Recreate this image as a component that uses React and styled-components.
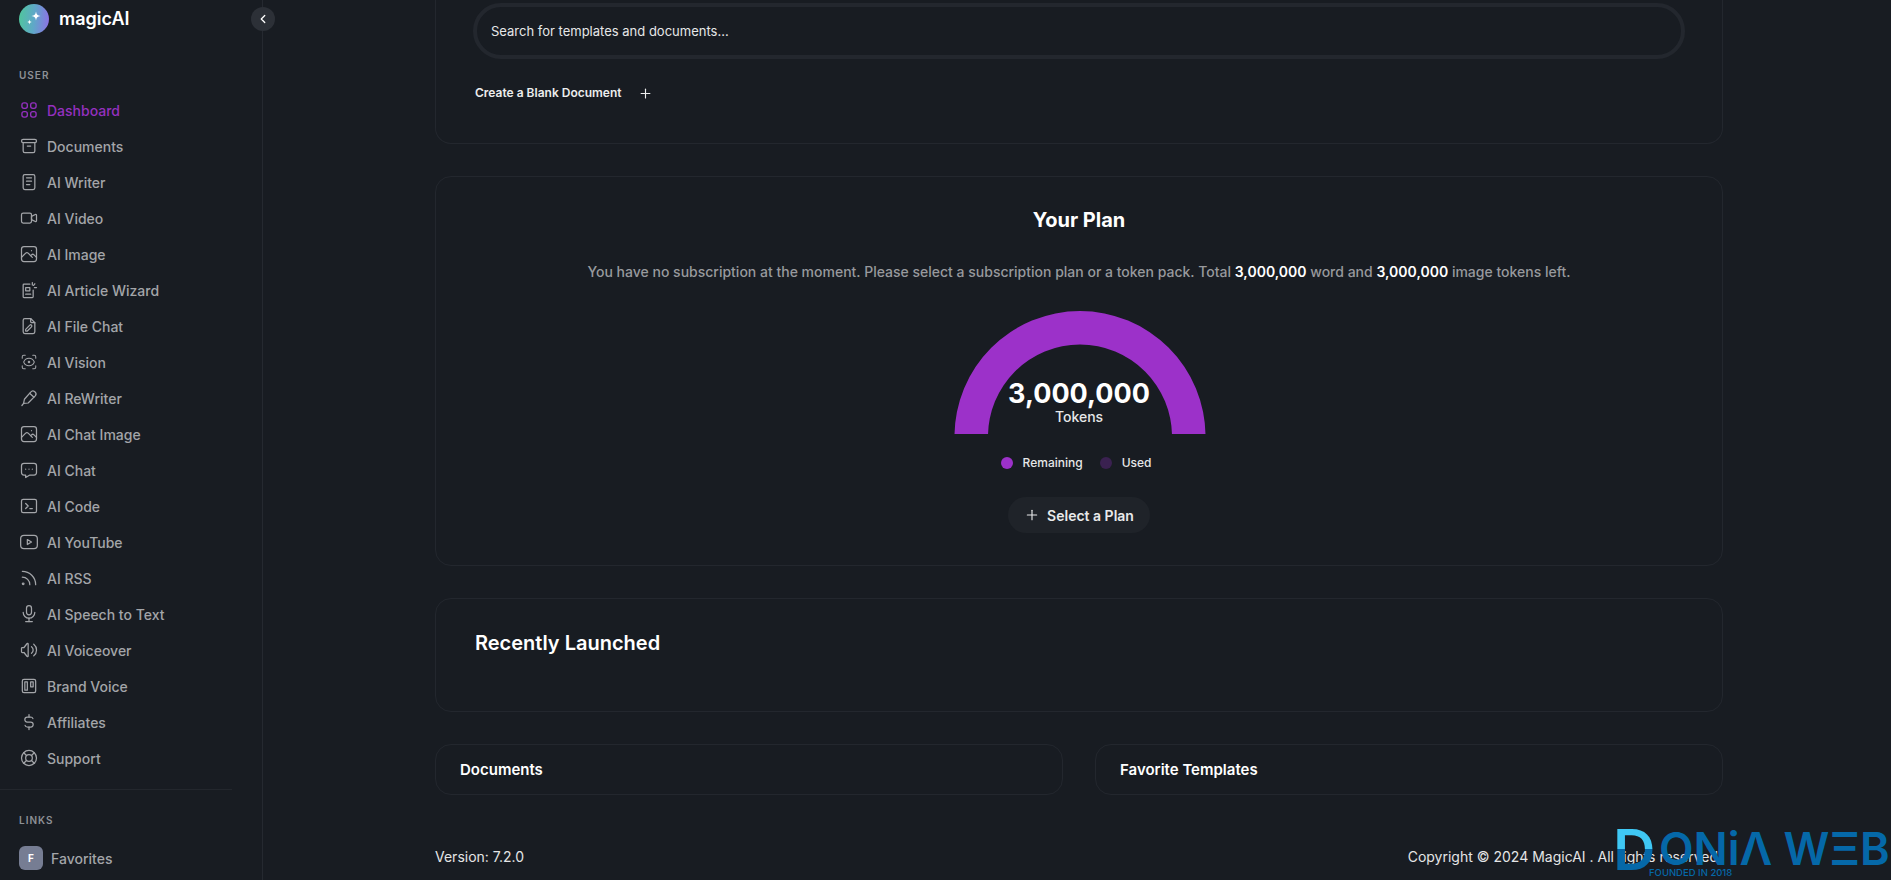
import React from "react";
import styled, { createGlobalStyle } from "styled-components";
import { ScanEye } from "lucide-react";
import {
  TbArchive,
  TbNotes,
  TbVideo,
  TbPhoto,
  TbFilePencil,
  TbMessageDots,
  TbTerminal2,
  TbBrandYoutube,
  TbRss,
  TbMicrophone,
  TbVolume,
  TbBrandTrello,
  TbCurrencyDollar,
  TbLifebuoy,
  TbChevronLeft,
  TbPlus,
} from "react-icons/tb";

const DashboardIcon = () => (
  <svg width="20" height="20" viewBox="0 0 24 24" fill="none" stroke="currentColor" strokeWidth="1.6">
    <rect x="3.500" y="3.500" width="6.500" height="6.500" rx="2.500" />
    <rect x="14" y="3.500" width="6.500" height="6.500" rx="2.500" />
    <rect x="3.500" y="14" width="6.500" height="6.500" rx="2.500" />
    <rect x="14" y="14" width="6.500" height="6.500" rx="2.500" />
  </svg>
);

const ArticleIcon = () => (
  <svg width="20" height="20" viewBox="0 0 24 24" fill="none" stroke="currentColor" strokeWidth="1.5" strokeLinecap="round" strokeLinejoin="round">
    <path d="M13 5H6a1 1 0 0 0-1 1v14a1 1 0 0 0 1 1h10a1 1 0 0 0 1-1v-8" />
    <rect x="8" y="9" width="5" height="4" />
    <path d="M8 17h6" />
    <path d="M16 3v3M19 4.500l-1.500 2M21 9h-2.500" />
  </svg>
);

const PenIcon = () => (
  <svg width="20" height="20" viewBox="0 0 24 24" fill="none" stroke="currentColor" strokeWidth="1.5" strokeLinecap="round" strokeLinejoin="round">
    <path d="M5.500 18.500 6.500 13.500 14 5a3.500 3.500 0 0 1 5.500 4.500L11 18z" />
    <path d="M13 6.500 18 11" />
    <path d="M5.500 18.500 3.500 21" />
  </svg>
);

const ScanIcon = () => <ScanEye size={18} strokeWidth={1.4} />;

const navItems = [
  { label: "Dashboard", icon: DashboardIcon, active: true },
  { label: "Documents", icon: TbArchive },
  { label: "AI Writer", icon: TbNotes },
  { label: "AI Video", icon: TbVideo },
  { label: "AI Image", icon: TbPhoto },
  { label: "AI Article Wizard", icon: ArticleIcon },
  { label: "AI File Chat", icon: TbFilePencil },
  { label: "AI Vision", icon: ScanIcon },
  { label: "AI ReWriter", icon: PenIcon },
  { label: "AI Chat Image", icon: TbPhoto },
  { label: "AI Chat", icon: TbMessageDots },
  { label: "AI Code", icon: TbTerminal2 },
  { label: "AI YouTube", icon: TbBrandYoutube },
  { label: "AI RSS", icon: TbRss },
  { label: "AI Speech to Text", icon: TbMicrophone },
  { label: "AI Voiceover", icon: TbVolume },
  { label: "Brand Voice", icon: TbBrandTrello },
  { label: "Affiliates", icon: TbCurrencyDollar },
  { label: "Support", icon: TbLifebuoy },
];

export default function App() {
  return (
    <>
      <GlobalStyle />
      <Shell>
        <Sidebar>
          <Brand>
            <LogoMark>
              <svg width="20" height="20" viewBox="0 0 20 20" fill="#fff">
                <path d="M12 2.500c.5 3 1.500 4 4.500 4.500-3 .5-4 1.500-4.500 4.500-.5-3-1.500-4-4.500-4.500 3-.5 4-1.500 4.500-4.500z" />
                <path d="M5.500 10.500c.3 1.700.8 2.200 2.500 2.500-1.700.3-2.200.8-2.500 2.500-.3-1.700-.8-2.200-2.500-2.500 1.700-.3 2.200-.8 2.500-2.500z" />
              </svg>
            </LogoMark>
            <BrandName>magicAI</BrandName>
          </Brand>
          <SectionLabel>User</SectionLabel>
          <NavList>
            {navItems.map((item) => (
              <NavRow key={item.label} $active={item.active}>
                <NavIcon>
                  <item.icon size={20} strokeWidth={1.5} />
                </NavIcon>
                {item.label}
              </NavRow>
            ))}
          </NavList>
          <SideDivider />
          <LinksLabel>Links</LinksLabel>
          <LinkRow>
            <LinkAvatar>F</LinkAvatar>
            Favorites
          </LinkRow>
        </Sidebar>
        <Gutter>
          <CollapseButton>
            <TbChevronLeft size={14} strokeWidth={2.2} />
          </CollapseButton>
        </Gutter>
        <Main>
          <SearchCard>
            <SearchField>Search for templates and documents...</SearchField>
            <BlankDoc>
              Create a Blank Document
              <TbPlus size={15} strokeWidth={1.8} />
            </BlankDoc>
          </SearchCard>

          <PlanCard>
            <PlanTitle>Your Plan</PlanTitle>
            <PlanText>
              You have no subscription at the moment. Please select a subscription plan or a token pack. Total{" "}
              <strong>3,000,000</strong> word and <strong>3,000,000</strong> image tokens left.
            </PlanText>
            <Gauge>
              <svg width="252" height="123" viewBox="0 0 252 123">
                <path d="M0.500 123V125.500a125.500 125.500 0 0 1 251 0V123h-33.500V125.500a92 92 0 0 0-184 0V123z" fill="#9c31c9" />
              </svg>
              <GaugeValue>
                <strong>3,000,000</strong>
                <span>Tokens</span>
              </GaugeValue>
            </Gauge>
            <Legend>
              <LegendItem $color="#9c31c9">Remaining</LegendItem>
              <LegendItem $color="#3a2150">Used</LegendItem>
            </Legend>
            <PlanButton>
              <TbPlus size={16} strokeWidth={1.7} />
              Select a Plan
            </PlanButton>
          </PlanCard>

          <RecentCard>
            <RecentTitle>Recently Launched</RecentTitle>
          </RecentCard>

          <TwoColumns>
            <SmallCard>Documents</SmallCard>
            <SmallCard>Favorite Templates</SmallCard>
          </TwoColumns>

          <Footer>
            <span>Version: 7.2.0</span>
            <span>Copyright © 2024 MagicAI . All rights reserved.</span>
          </Footer>
        </Main>
        <Watermark aria-label="DONIAWEB">
          <WatermarkD>D</WatermarkD>
          <WatermarkWord>ONiΛ WΞB</WatermarkWord>
          <WatermarkTag>FOUNDED IN 2018</WatermarkTag>
        </Watermark>
      </Shell>
    </>
  );
}

const GlobalStyle = createGlobalStyle`
  html, body {
    margin: 0;
    height: 100%;
    overflow: hidden;
    background: #181c22;
    font-family: Inter, "Liberation Sans", sans-serif;
    color: #fff;
  }
`;

const Shell = styled.div`
  position: relative;
  display: flex;
  height: 880px;
  overflow: hidden;
`;

const Sidebar = styled.aside`
  width: 232px;
  flex: none;
  display: flex;
  flex-direction: column;
`;

const Brand = styled.div`
  display: flex;
  align-items: center;
  gap: 10px;
  height: 37px;
  padding-left: 19px;
`;

const LogoMark = styled.div`
  width: 30px;
  height: 30px;
  border-radius: 50%;
  display: flex;
  align-items: center;
  justify-content: center;
  background: linear-gradient(95deg, #4fc79a 0%, #5fa8c8 50%, #8f6fe6 100%);
`;

const BrandName = styled.div`
  font-size: 18px;
  font-weight: 600;
  line-height: 37px;
`;

const SectionLabel = styled.div`
  margin: 30px 0 0 19px;
  font-size: 10px;
  line-height: 16px;
  font-weight: 600;
  letter-spacing: 1px;
  text-transform: uppercase;
  color: #8d9095;
`;

const NavList = styled.nav`
  display: flex;
  flex-direction: column;
  margin-top: 9px;
`;

const NavRow = styled.div`
  display: flex;
  align-items: center;
  gap: 8px;
  height: 36px;
  padding-left: 19px;
  font-size: 14px;
  font-weight: 500;
  color: ${(p) => (p.$active ? "#9430bf" : "#a3a5a9")};
`;

const NavIcon = styled.span`
  display: flex;
  width: 20px;
  justify-content: center;
`;

const SideDivider = styled.div`
  height: 1px;
  margin-top: 13px;
  background: #23272d;
`;

const LinksLabel = styled(SectionLabel)`
  margin-top: 22px;
`;

const LinkRow = styled.div`
  display: flex;
  align-items: center;
  gap: 8px;
  margin: 18px 0 0 19px;
  font-size: 14px;
  font-weight: 500;
  color: #a3a5a9;
`;

const LinkAvatar = styled.div`
  width: 24px;
  height: 24px;
  border-radius: 6px;
  display: flex;
  align-items: center;
  justify-content: center;
  background: #767d93;
  color: #fff;
  font-size: 10px;
  font-weight: 700;
`;

const Gutter = styled.div`
  position: relative;
  width: 31px;
  flex: none;
  border-right: 1px solid #252930;
  box-sizing: border-box;
`;

const CollapseButton = styled.button`
  position: absolute;
  top: 7px;
  left: 19px;
  width: 24px;
  height: 24px;
  padding: 0;
  border: 0;
  border-radius: 50%;
  display: flex;
  align-items: center;
  justify-content: center;
  background: #2c3037;
  color: #fff;
`;

const Main = styled.main`
  flex: 1;
  min-width: 0;
  display: flex;
  flex-direction: column;
  gap: 32px;
  padding: 0 168px 0 172px;
`;

const Card = styled.section`
  box-sizing: border-box;
  border: 1px solid #23272e;
  border-radius: 16px;
`;

const SearchCard = styled(Card)`
  height: 144px;
  padding: 3px 37px 0 37px;
  border-top: 0;
  border-radius: 0 0 16px 16px;
`;

const SearchField = styled.div`
  box-sizing: border-box;
  height: 56px;
  display: flex;
  align-items: center;
  padding-left: 14px;
  border: 4px solid #23272e;
  border-radius: 28px;
  font-size: 13px;
  color: #e6e7e8;
`;

const BlankDoc = styled.div`
  display: flex;
  align-items: center;
  gap: 16px;
  margin: 25px 0 0 2px;
  font-size: 12px;
  line-height: 18px;
  font-weight: 600;
  color: #eceded;
`;

const PlanCard = styled(Card)`
  height: 390px;
  display: flex;
  flex-direction: column;
  align-items: center;
  padding-top: 31px;
`;

const PlanTitle = styled.h2`
  margin: 0;
  font-size: 20px;
  line-height: 24px;
  font-weight: 700;
`;

const PlanText = styled.p`
  margin: 30px 0 0;
  font-size: 14px;
  line-height: 20px;
  font-weight: 500;
  color: #97999d;

  strong {
    font-weight: 600;
    color: #fff;
  }
`;

const Gauge = styled.div`
  position: relative;
  width: 252px;
  height: 123px;
  margin: 29px 0 0 2px;

  svg {
    display: block;
  }
`;

const GaugeValue = styled.div`
  position: absolute;
  left: -2px;
  right: 0;
  bottom: 9px;
  display: flex;
  flex-direction: column;
  align-items: center;

  strong {
    font-size: 27px;
    line-height: 31px;
    font-weight: 700;
  }

  span {
    font-size: 14px;
    line-height: 16px;
    font-weight: 500;
    color: #e6e7e8;
  }
`;

const Legend = styled.div`
  display: flex;
  gap: 17px;
  margin: 20px 6px 0 0;
`;

const LegendItem = styled.div`
  display: flex;
  align-items: center;
  gap: 10px;
  font-size: 12px;
  line-height: 18px;
  font-weight: 500;
  color: #e6e7e8;

  &::before {
    content: "";
    width: 12px;
    height: 12px;
    border-radius: 50%;
    background: ${(p) => p.$color};
  }
`;

const PlanButton = styled.button`
  display: flex;
  align-items: center;
  gap: 7px;
  height: 36px;
  margin-top: 25px;
  padding: 0 16px;
  border: 0;
  border-radius: 18px;
  background: #1f2329;
  color: #e9eaeb;
  font-family: inherit;
  font-size: 14px;
  font-weight: 600;
`;

const RecentCard = styled(Card)`
  height: 114px;
  padding: 30px 39px 0;
`;

const RecentTitle = styled.h2`
  margin: 0;
  font-size: 20px;
  line-height: 28px;
  font-weight: 600;
`;

const TwoColumns = styled.div`
  display: grid;
  grid-template-columns: 1fr 1fr;
  gap: 32px;
`;

const SmallCard = styled(Card)`
  height: 51px;
  display: flex;
  align-items: center;
  padding-left: 24px;
  font-size: 15px;
  font-weight: 600;
`;

const Footer = styled.footer`
  display: flex;
  justify-content: space-between;
  margin-top: 20px;
  padding-right: 1px;
  font-size: 14px;
  line-height: 20px;
  color: #e4e5e6;
`;

const Watermark = styled.div`
  position: absolute;
  left: 1617px;
  top: 822px;
  width: 270px;
  height: 58px;
  color: #0568a8;
`;

const WatermarkD = styled.span`
  position: absolute;
  left: -4px;
  top: -6px;
  font-size: 56px;
  line-height: 68px;
  font-weight: 600;
  background: linear-gradient(180deg, #3fc8f4 0 48%, #0568a8 48% 100%);
  -webkit-background-clip: text;
  background-clip: text;
  color: transparent;
  transform: scaleX(1.05);
  transform-origin: left;
`;

const WatermarkWord = styled.span`
  position: absolute;
  left: 42px;
  top: 0;
  font-size: 45px;
  line-height: 54px;
  font-weight: 600;
  white-space: nowrap;
`;

const WatermarkTag = styled.span`
  position: absolute;
  left: 32px;
  top: 45px;
  font-size: 9.500px;
  line-height: 12px;
  font-weight: 500;
  white-space: nowrap;
`;
